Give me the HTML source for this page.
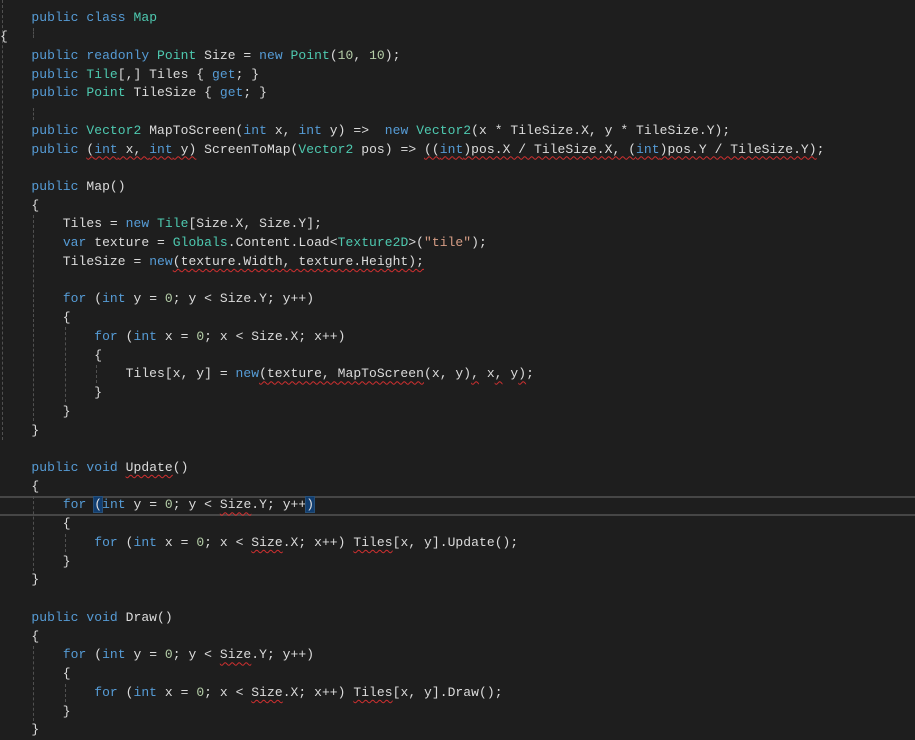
<!DOCTYPE html>
<html><head><meta charset="utf-8"><style>
html,body{margin:0;padding:0;background:#1e1e1e;width:915px;height:739px;overflow:hidden}
#c{position:absolute;left:0;top:9.4px;font-family:"Liberation Mono",monospace;font-size:13px;letter-spacing:0.05px;line-height:18.74px;color:#dcdcdc;white-space:pre}
.k{color:#569cd6}.t{color:#4ec9b0}.n{color:#b5cea8}.s{color:#d69d85}
.w{text-decoration:underline wavy #d03030;text-decoration-thickness:1px;text-underline-offset:3px}
.hl{position:absolute;left:0;top:496px;width:915px;height:16px;border-top:2px solid #464646;border-bottom:2px solid #464646}
.g{position:absolute;width:0;border-left:1px dashed #505050}
.b{outline:1px solid #264f78;background:#113d6f}
</style></head><body>
<div class="hl"></div>
<div class="g" style="left:2px;top:0;height:440px"></div>
<div class="g" style="left:33px;top:28px;height:10px"></div>
<div class="g" style="left:33px;top:108px;height:12px"></div>
<div class="g" style="left:33px;top:215px;height:206px"></div>
<div class="g" style="left:65px;top:327px;height:75px"></div>
<div class="g" style="left:96px;top:365px;height:18px"></div>
<div class="g" style="left:33px;top:496px;height:75px"></div>
<div class="g" style="left:65px;top:534px;height:18px"></div>
<div class="g" style="left:33px;top:646px;height:75px"></div>
<div class="g" style="left:65px;top:684px;height:18px"></div>
<div id="c">    <span class="k">public</span> <span class="k">class</span> <span class="t">Map</span>
{
    <span class="k">public</span> <span class="k">readonly</span> <span class="t">Point</span> Size = <span class="k">new</span> <span class="t">Point</span>(<span class="n">10</span>, <span class="n">10</span>);
    <span class="k">public</span> <span class="t">Tile</span>[,] Tiles { <span class="k">get</span>; }
    <span class="k">public</span> <span class="t">Point</span> TileSize { <span class="k">get</span>; }

    <span class="k">public</span> <span class="t">Vector2</span> MapToScreen(<span class="k">int</span> x, <span class="k">int</span> y) =&gt;  <span class="k">new</span> <span class="t">Vector2</span>(x * TileSize.X, y * TileSize.Y);
    <span class="k">public</span> <span class="w">(<span class="k">int</span> x, <span class="k">int</span> y)</span> ScreenToMap(<span class="t">Vector2</span> pos) =&gt; <span class="w">((<span class="k">int</span>)pos.X / TileSize.X, (<span class="k">int</span>)pos.Y / TileSize.Y)</span>;

    <span class="k">public</span> Map()
    {
        Tiles = <span class="k">new</span> <span class="t">Tile</span>[Size.X, Size.Y];
        <span class="k">var</span> texture = <span class="t">Globals</span>.Content.Load&lt;<span class="t">Texture2D</span>&gt;(<span class="s">"tile"</span>);
        TileSize = <span class="k">new</span><span class="w">(texture.Width, texture.Height);</span>

        <span class="k">for</span> (<span class="k">int</span> y = <span class="n">0</span>; y &lt; Size.Y; y++)
        {
            <span class="k">for</span> (<span class="k">int</span> x = <span class="n">0</span>; x &lt; Size.X; x++)
            {
                Tiles[x, y] = <span class="k">new</span><span class="w">(texture, MapToScreen</span>(x, y)<span class="w">,</span> x<span class="w">,</span> y<span class="w">)</span>;
            }
        }
    }

    <span class="k">public</span> <span class="k">void</span> <span class="w">Update</span>()
    {
        <span class="k">for</span> <span class="b">(</span><span class="k">int</span> y = <span class="n">0</span>; y &lt; <span class="w">Size</span>.Y; y++<span class="b">)</span>
        {
            <span class="k">for</span> (<span class="k">int</span> x = <span class="n">0</span>; x &lt; <span class="w">Size</span>.X; x++) <span class="w">Tiles</span>[x, y].Update();
        }
    }

    <span class="k">public</span> <span class="k">void</span> Draw()
    {
        <span class="k">for</span> (<span class="k">int</span> y = <span class="n">0</span>; y &lt; <span class="w">Size</span>.Y; y++)
        {
            <span class="k">for</span> (<span class="k">int</span> x = <span class="n">0</span>; x &lt; <span class="w">Size</span>.X; x++) <span class="w">Tiles</span>[x, y].Draw();
        }
    }</div>
</body></html>
